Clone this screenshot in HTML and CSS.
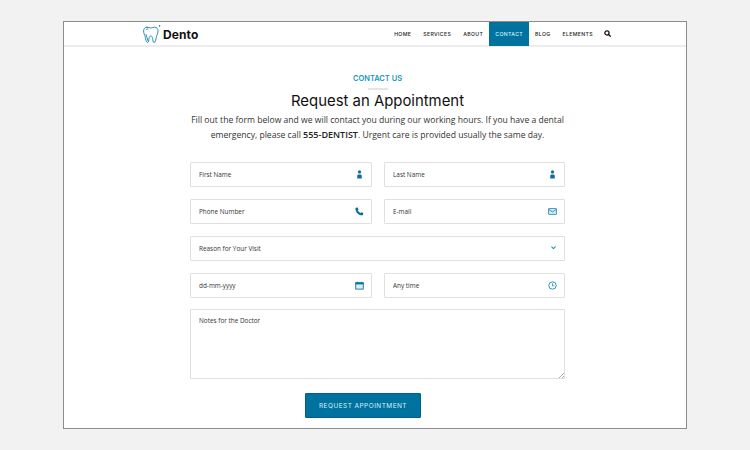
FILE: index.html
```html
<!DOCTYPE html>
<html lang="en">
<head>
<meta charset="utf-8">
<title>Dento - Request an Appointment</title>
<link rel="stylesheet" href="styles.css">
</head>
<body>
<div class="frame">
  <header class="topbar">
    <a class="logo" href="#">
      <svg class="logo-mark" viewBox="0 0 20 20" width="20" height="20" fill="none" stroke="#1a82ab" stroke-width=".9" stroke-linecap="round" stroke-linejoin="round">
        <path d="M5 3.200C3 3.200 1.600 4.800 1.600 7c0 2.600 1.300 4 1.700 6.200.4 2 .8 5.300 2.200 5.300 1.300 0 1.200-2.500 1.500-4.200.2-1.200.7-2.300 1.800-2.300s1.600 1.100 1.800 2.300c.3 1.700.2 4.200 1.500 4.200 1.400 0 1.800-3.300 2.200-5.300.4-2.200 1.700-3.600 1.700-6.200 0-2.200-1.400-3.800-3.400-3.800-1.500 0-2.300.8-3.800.8S6.500 3.200 5 3.200z"/>
        <path d="M4.200 5.800c.4-.7 1-.9 1.700-.9"/>
        <path d="M5.800 16.500c-.6-1.800-.8-4-1.800-6"/>
        <circle cx="17.300" cy="1.900" r=".4"/>
      </svg>
      <span class="logo-text">Dento</span>
    </a>
    <nav class="nav">
      <a class="nav-link" href="#">HOME</a>
      <a class="nav-link" href="#">SERVICES</a>
      <a class="nav-link" href="#">ABOUT</a>
      <a class="nav-link nav-active" href="#">CONTACT</a>
      <a class="nav-link" href="#">BLOG</a>
      <a class="nav-link" href="#">ELEMENTS</a>
      <svg class="nav-search" viewBox="0 0 10 10" width="7" height="7" fill="none" stroke="#111" stroke-width="1.800" stroke-linecap="round"><circle cx="4.200" cy="4.200" r="3"/><path d="M6.500 6.500L9 9"/></svg>
    </nav>
  </header>

  <main class="content">
    <p class="eyebrow">CONTACT US</p>
    <div class="rule"></div>
    <h1 class="title">Request an Appointment</h1>
    <p class="lead">Fill out the form below and we will contact you during our working hours. If you have a dental emergency, please call <strong>555-DENTIST</strong>. Urgent care is provided usually the same day.</p>

    <form class="form">
      <label class="field">
        <input class="control" type="text" placeholder="First Name">
        <svg class="icon" viewBox="0 0 10 10" width="9" height="9"><circle cx="5" cy="2.200" r="1.800" fill="#0c6f9b"/><path d="M2.500 9.500V6.500c0-1 .7-1.600 1.600-1.600h1.800c.9 0 1.600.6 1.600 1.600v3z" fill="#0c6f9b"/></svg>
      </label>
      <label class="field">
        <input class="control" type="text" placeholder="Last Name">
        <svg class="icon" viewBox="0 0 10 10" width="9" height="9"><circle cx="5" cy="2.200" r="1.800" fill="#0c6f9b"/><path d="M2.500 9.500V6.500c0-1 .7-1.600 1.600-1.600h1.800c.9 0 1.600.6 1.600 1.600v3z" fill="#0c6f9b"/></svg>
      </label>
      <label class="field">
        <input class="control" type="text" placeholder="Phone Number">
        <svg class="icon" viewBox="0 0 10 10" width="9" height="9"><path d="M1 .8l2-.3 1 2.200-1 1c.6 1.300 1.600 2.300 3 3l1-1 2.200 1-.3 2c-.1.400-.4.600-.8.600C4.100 9.300.7 5.900.4 1.600c0-.4.200-.7.600-.8z" fill="#0c6f9b"/></svg>
      </label>
      <label class="field">
        <input class="control" type="text" placeholder="E-mail">
        <svg class="icon icon-wide" viewBox="0 0 10 8" width="9" height="7" stroke="#1782ad" stroke-width=".9"><rect x=".5" y=".5" width="9" height="7" rx=".6" fill="#cfe9f3"/><path d="M.8 1.500L5 4.600l4.200-3.100" fill="none"/></svg>
      </label>
      <label class="field field-full">
        <select class="control select">
          <option>Reason for Your Visit</option>
        </select>
        <svg class="icon" viewBox="0 0 10 10" width="7" height="7" fill="none" stroke="#1a8db5" stroke-width="1.500" stroke-linecap="round" stroke-linejoin="round"><path d="M2.500 4l2.500 2.500L7.500 4"/></svg>
      </label>
      <label class="field">
        <input class="control" type="text" placeholder="dd-mm-yyyy">
        <svg class="icon" viewBox="0 0 10 10" width="9" height="9"><rect x=".8" y="2" width="8.400" height="7" fill="#d8eff7" stroke="#0f76a0"/><rect x=".5" y="1.500" width="9" height="2.300" fill="#0f76a0"/><path d="M2.800.8v1.500M7.200.8v1.500" stroke="#0f76a0"/></svg>
      </label>
      <label class="field">
        <input class="control" type="text" placeholder="Any time">
        <svg class="icon" viewBox="0 0 10 10" width="9" height="9" fill="none" stroke="#1a8db5"><circle cx="5" cy="5" r="4.100"/><path d="M5 2.600V5.300H7.200" stroke-width=".9"/></svg>
      </label>
      <textarea class="control notes field-full" placeholder="Notes for the Doctor"></textarea>
      <button class="submit field-full" type="button">REQUEST APPOINTMENT</button>
    </form>
  </main>
</div>
</body>
</html>
```

FILE: styles.css
```css
* { box-sizing: border-box; }

html, body { height: 100%; }

body {
  margin: 0;
  padding: 21px 63px;
  background: #f2f2f2;
  font-family: "Open Sans", "Liberation Sans", sans-serif;
  color: #333;
  overflow: hidden;
}

.frame {
  height: 408px;
  background: #fff;
  border: 1px solid #8c8c8c;
  overflow: hidden;
}

.topbar {
  display: flex;
  justify-content: space-between;
  height: 23px;
  box-sizing: content-box;
  padding-left: 78px;
  padding-right: 75px;
  border-bottom: 2px solid #ececec;
}

.logo {
  display: flex;
  align-items: center;
  text-decoration: none;
}

.logo-mark { display: block; }

.logo-text {
  margin-left: 1px;
  padding-top: 1px;
  font-family: Inter, "Liberation Sans", sans-serif;
  font-weight: 700;
  font-size: 12px;
  letter-spacing: .1px;
  color: #111;
}

.nav {
  display: flex;
  align-items: stretch;
}

.nav-link {
  display: flex;
  align-items: center;
  padding: 0 6px;
  font-family: Inter, "Liberation Sans", sans-serif;
  font-size: 5.200px;
  font-weight: 500;
  letter-spacing: .35px;
  color: #222;
  text-decoration: none;
}

.nav-active {
  background: #00729f;
  color: #d8f1fa;
  margin-bottom: -1px;
}

.nav-search {
  align-self: center;
  margin-left: 5px;
}

.content {
  display: flex;
  flex-direction: column;
  align-items: center;
  padding-left: 5px;
}

.eyebrow {
  margin: 26px 0 0;
  font-family: Inter, "Liberation Sans", sans-serif;
  font-size: 7.500px;
  line-height: 12px;
  font-weight: 600;
  color: #1a96bd;
}

.rule {
  width: 20px;
  height: 2px;
  margin-top: 3px;
  background: #e4e4e4;
}

.title {
  margin: 1px 0 0;
  font-family: Inter, "Liberation Sans", sans-serif;
  font-size: 14.900px;
  line-height: 20px;
  font-weight: 400;
  color: #111;
}

.lead {
  width: 390px;
  margin: 2px 0 0;
  font-size: 8.600px;
  line-height: 15px;
  text-align: center;
  color: #333;
}

.lead strong {
  color: #222;
  font-size: 9px;
  line-height: 1;
  font-weight: 600;
}

.form {
  width: 375px;
  margin-top: 19px;
  display: grid;
  grid-template-columns: 182px 181px;
  column-gap: 12px;
  row-gap: 12px;
}

.field {
  position: relative;
  display: block;
}

.field-full { grid-column: 1 / -1; }

.control {
  display: block;
  width: 100%;
  height: 25px;
  padding: 0 24px 0 8px;
  border: 1px solid #e0e0e0;
  border-radius: 1px;
  background: #fff;
  font-family: "Open Sans", "Liberation Sans", sans-serif;
  font-size: 6.400px;
  color: #333;
  outline: none;
}

.control::placeholder {
  color: #333;
  opacity: 1;
}

.select { appearance: none; }

.icon {
  position: absolute;
  top: 8px;
  right: 8px;
  pointer-events: none;
}

.icon-wide { top: 9px; }

.notes {
  height: 70px;
  padding: 6px 8px;
  resize: vertical;
  margin-top: -1px;
}

.notes::-webkit-resizer {
  background: linear-gradient(135deg, transparent 40%, #aaa 40%, #aaa 55%, transparent 55%, transparent 70%, #aaa 70%, #aaa 85%, transparent 85%) no-repeat right bottom / 5px 5px;
}

.submit {
  grid-column: 1 / -1;
  justify-self: start;
  width: 116px;
  height: 25px;
  margin-top: 2px;
  margin-left: 115px;
  border: 1px solid #005f86;
  border-radius: 1px;
  background: #00729f;
  color: #d8f1fa;
  font-family: Inter, "Liberation Sans", sans-serif;
  font-size: 6.500px;
  font-weight: 400;
  letter-spacing: .45px;
}
```
